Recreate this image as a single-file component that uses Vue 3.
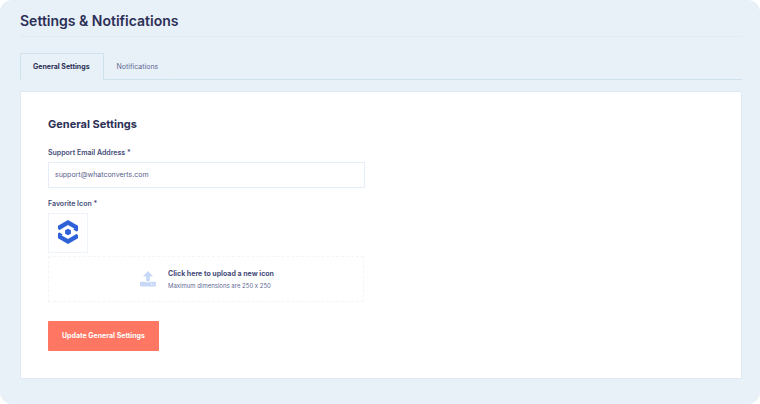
<script setup>
import { ref } from 'vue'

const tabs = ['General Settings', 'Notifications']
const active = ref(tabs[0])
const email = ref('support@whatconverts.com')
</script>

<template>
  <main class="page">
    <h1 class="title">Settings &amp; Notifications</h1>

    <nav class="tabs" role="tablist">
      <button
        v-for="tab in tabs"
        :key="tab"
        type="button"
        role="tab"
        class="tab"
        :class="{ active: tab === active }"
        :aria-selected="tab === active"
        @click="active = tab"
      >{{ tab }}</button>
    </nav>

    <form class="card" @submit.prevent>
      <h2 class="heading">General Settings</h2>

      <label class="label" for="email">Support Email Address *</label>
      <input id="email" v-model="email" class="input" type="email" />

      <label class="label" for="icon-file">Favorite Icon *</label>
      <div class="preview">
        <svg class="logo" viewBox="0 0 20 24" aria-hidden="true">
          <path fill="#2f62d9" d="M10 0 20 5.8V10.7L18.6 11.5 15.2 9.6 16.6 8.8 10 5.1 1.6 9.9 0 9V5.8Z" />
          <path fill="#2f62d9" d="M10 24 0 18.2V13.3L1.4 12.5 4.8 14.4 3.4 15.2 10 18.9 18.4 14.1 20 15V18.2Z" />
          <path fill="#2f62d9" d="M10 8.7 12.9 10.3V13.7L10 15.3 7.1 13.7V10.3Z" />
        </svg>
      </div>
      <label class="upload">
        <input id="icon-file" class="file" type="file" accept="image/*" />
        <svg class="arrow" viewBox="0 0 16 16" aria-hidden="true">
          <path fill="#c7d7f7" d="M8 0 13 5.4H9.8V10.2H6.2V5.4H3Z" />
          <path fill="#c7d7f7" fill-rule="evenodd" d="M1 10.8H5.2V11.2H10.8V10.8H15Q16 10.8 16 11.8V14.5Q16 15.5 15 15.5H1Q0 15.5 0 14.5V11.8Q0 10.8 1 10.8ZM11 12.8V13.8H12V12.8ZM13.2 12.8V13.8H14.2V12.8Z" />
        </svg>
        <span class="upload-text">
          <strong class="upload-title">Click here to upload a new icon</strong>
          <span class="upload-hint">Maximum dimensions are 250 x 250</span>
        </span>
      </label>

      <button class="submit" type="submit">Update General Settings</button>
    </form>
  </main>
</template>

<style>
body {
  background: #fff;
}
</style>

<style scoped>
.page {
  box-sizing: border-box;
  min-height: 100vh;
  padding: 9px 18px 25px 20px;
  border-radius: 12px;
  background: #e8f0f8;
  color: #2b2f55;
  font-family: Inter, "Liberation Sans", sans-serif;
  font-variant-ligatures: no-contextual;
}

.title {
  margin: 0 0 16px;
  padding-bottom: 3px;
  border-bottom: 1px solid #e0ebf5;
  font-size: 14px;
  font-weight: 600;
  line-height: 24px;
}

.tabs {
  display: flex;
  margin-bottom: 11px;
}

.tabs::after {
  content: "";
  flex: 1;
  border-bottom: 1px solid #cfe1ec;
}

.tab {
  height: 27px;
  padding: 0 12px;
  border: 1px solid transparent;
  border-bottom-color: #cfe1ec;
  background: none;
  color: #626a94;
  font: 400 7px/16px Inter, "Liberation Sans", sans-serif;
  cursor: pointer;
}

.tab.active {
  padding: 0 13px 0 12px;
  border-color: #cfe1ec #cfe1ec transparent;
  color: #2b2f55;
  font-weight: 700;
}

.card {
  display: flex;
  flex-direction: column;
  align-items: flex-start;
  padding: 24px 27px 27px;
  border: 1px solid #dfe9f3;
  border-radius: 1px;
  background: #fff;
}

.heading {
  margin: 0 0 13px;
  font-size: 11px;
  font-weight: 700;
  line-height: 16px;
}

.label {
  margin-bottom: 1px;
  color: #454b78;
  font-size: 7px;
  font-weight: 600;
  line-height: 16px;
}

.input {
  box-sizing: border-box;
  width: 100%;
  max-width: 317px;
  height: 26px;
  margin: 0 0 8px;
  padding: 0 6px 2px;
  border: 1px solid #e6edf9;
  border-radius: 1px;
  background: #fff;
  box-shadow: 0 0 1px #e6edf9;
  color: #59618c;
  font: 400 7px/16px Inter, "Liberation Sans", sans-serif;
  outline: none;
}

.preview {
  display: flex;
  box-sizing: border-box;
  align-items: center;
  justify-content: center;
  width: 40px;
  height: 40px;
  margin-bottom: 3px;
  padding-bottom: 2px;
  border: 1px solid #eff3fa;
}

.logo {
  width: 20px;
  height: 24px;
}

.upload {
  position: relative;
  display: flex;
  box-sizing: border-box;
  align-items: center;
  justify-content: center;
  gap: 12px;
  width: 100%;
  max-width: 316px;
  height: 46px;
  margin-bottom: 19px;
  padding-left: 2px;
  border: 1px dashed #f4f5f8;
  cursor: pointer;
}

.file {
  position: absolute;
  inset: 0;
  width: 100%;
  opacity: 0;
}

.arrow {
  width: 16px;
  height: 16px;
}

.upload-text {
  display: flex;
  flex-direction: column;
  padding-top: 2px;
}

.upload-title {
  color: #454b78;
  font-size: 7px;
  font-weight: 700;
  line-height: 12px;
}

.upload-hint {
  color: #626a94;
  font-size: 6px;
  line-height: 12px;
}

.submit {
  height: 30px;
  padding: 0 14px;
  border: 0;
  border-radius: 1px;
  background: #ff7662;
  color: #fff;
  font: 700 7px/16px Inter, "Liberation Sans", sans-serif;
  cursor: pointer;
}
</style>
